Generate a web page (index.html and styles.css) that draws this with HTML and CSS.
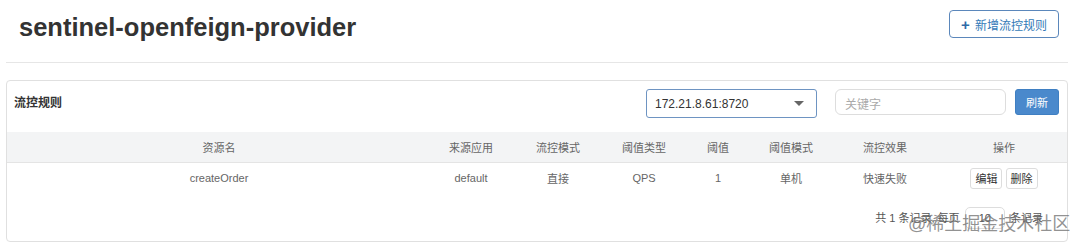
FILE: index.html
```html
<!DOCTYPE html>
<html lang="zh-CN">
<head>
  <meta charset="UTF-8">
  <title>流控规则 - sentinel-openfeign-provider</title>
  <link rel="stylesheet" href="styles.css">
</head>
<body>
  <div class="page-head">
    <h1>sentinel-openfeign-provider</h1>
    <button class="btn-outline"><span class="plus">+</span> 新增流控规则</button>
  </div>
  <hr class="divider">

  <div class="card">
    <div class="card-head">
      <span class="card-title">流控规则</span>
      <div class="tools">
        <div class="machine-select">
          <span>172.21.8.61:8720</span>
          <span class="caret"></span>
        </div>
        <div class="search">关键字</div>
        <button class="btn-primary">刷新</button>
      </div>
    </div>

    <table class="rules">
      <colgroup>
        <col style="width: 424px">
        <col style="width: 80px">
        <col style="width: 94px">
        <col style="width: 78px">
        <col style="width: 70px">
        <col style="width: 76px">
        <col style="width: 112px">
        <col style="width: 126px">
      </colgroup>
      <thead>
        <tr>
          <th>资源名</th>
          <th>来源应用</th>
          <th>流控模式</th>
          <th>阈值类型</th>
          <th>阈值</th>
          <th>阈值模式</th>
          <th>流控效果</th>
          <th>操作</th>
        </tr>
      </thead>
      <tbody>
        <tr>
          <td>createOrder</td>
          <td>default</td>
          <td>直接</td>
          <td>QPS</td>
          <td>1</td>
          <td>单机</td>
          <td>快速失败</td>
          <td>
            <button class="btn-sm">编辑</button>
            <button class="btn-sm">删除</button>
          </td>
        </tr>
      </tbody>
    </table>

    <div class="pager">
      共 1 条记录, 每页 <span class="page-size">10</span> 条记录
    </div>
  </div>

  <div class="watermark">@稀土掘金技术社区</div>
</body>
</html>
```

FILE: styles.css
```css
body {
  margin: 0;
  font-family: "Liberation Sans", Arial, "Noto Sans CJK SC", sans-serif;
  color: #333;
  background: #fff;
  position: relative;
  height: 247px;
  overflow: hidden;
}
.page-head {
  display: flex;
  justify-content: space-between;
  align-items: flex-start;
  padding: 10px 21px 0 19px;
  height: 42px;
}
h1 {
  margin: 3px 0 0;
  font-size: 25.5px;
  font-weight: 700;
  color: #333;
}
.btn-outline {
  font-family: inherit;
  width: 110px;
  height: 28px;
  padding: 0;
  font-size: 12px;
  color: #337ab7;
  background: #fff;
  border: 1px solid #5b87bb;
  border-radius: 4px;
}
.plus {
  font-weight: 700;
  font-size: 15px;
  color: #2f6aa6;
  margin-right: 2px;
}
.divider {
  margin: 10px 12px 0 6px;
  border: 0;
  border-top: 1px solid #e6e6e6;
}
.card {
  margin: 17px 12px 0 6px;
  border: 1px solid #e0e0e0;
  border-radius: 4px;
  height: 162px;
  box-sizing: border-box;
}
.card-head {
  display: flex;
  justify-content: space-between;
  height: 51px;
  padding: 0 8px 0 7px;
}
.card-title {
  font-size: 12px;
  font-weight: 700;
  margin-top: 12px;
}
.tools {
  display: flex;
  align-items: flex-start;
  margin-top: 8px;
}
.machine-select {
  width: 171px;
  height: 29px;
  box-sizing: border-box;
  border: 1px solid #6e94c2;
  border-radius: 3px;
  display: flex;
  align-items: center;
  justify-content: space-between;
  padding: 0 12px 0 8px;
  font-size: 12px;
  color: #333;
}
.caret {
  width: 0;
  height: 0;
  border-left: 5px solid transparent;
  border-right: 5px solid transparent;
  border-top: 5px solid #666;
}
.search {
  width: 171px;
  height: 26px;
  box-sizing: border-box;
  margin-left: 18px;
  border: 1px solid #ddd;
  border-radius: 6px;
  padding: 5px 9px;
  font-size: 12px;
  color: #aaa;
}
.btn-primary {
  margin-left: 9px;
  width: 44px;
  height: 26px;
  padding: 0;
  font-family: inherit;
  font-size: 11px;
  color: #fff;
  background: #4a89cc;
  border: 1px solid #3f7fc2;
  border-radius: 3px;
}
.rules {
  width: 1060px;
  border-collapse: collapse;
  table-layout: fixed;
  font-size: 11px;
  color: #666;
}
.rules th {
  height: 30px;
  font-weight: 400;
  background: #f3f4f5;
  border-bottom: 1px solid #e4e4e4;
  text-align: center;
  padding: 0;
}
.rules td {
  height: 30px;
  text-align: center;
  padding: 0;
}
.btn-sm {
  font-family: inherit;
  font-size: 11px;
  color: #333;
  background: #fff;
  border: 1px solid #ddd;
  border-radius: 3px;
  height: 21px;
  padding: 0 4px;
  margin: 0;
}
.pager {
  text-align: right;
  font-size: 11px;
  color: #555;
  padding: 14px 24px 0 0;
}
.page-size {
  display: inline-block;
  border: 1px solid #ddd;
  border-radius: 5px;
  padding: 4px 13px;
  margin: 0 2px;
}
.watermark {
  position: absolute;
  left: 908px;
  top: 209px;
  font-size: 18px;
  color: rgba(110, 110, 110, 0.75);
  white-space: nowrap;
}
```
